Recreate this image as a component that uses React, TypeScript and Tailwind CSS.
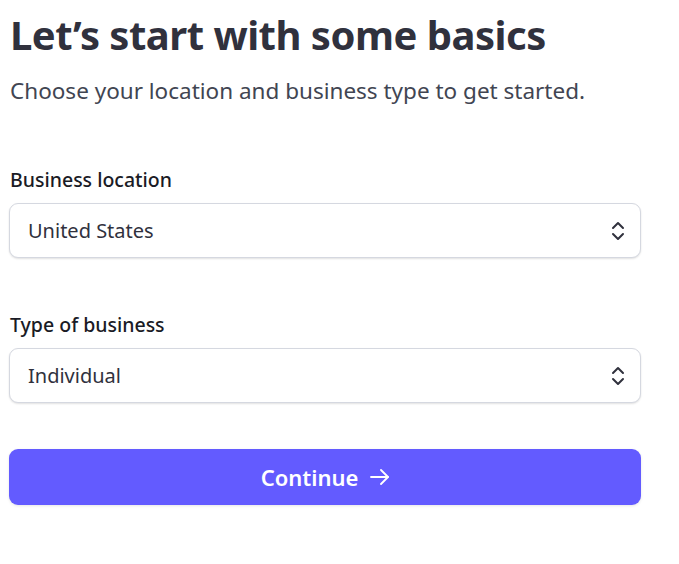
function SelectBox({ value }: { value: string }) {
  return (
    <div className="flex items-center justify-between h-[55px] pl-[18px] pr-[14px] bg-white border border-[#d5d8e0] rounded-[9px] shadow-[0_1px_2px_rgba(0,0,0,0.12)]">
      <span className="text-[20px] text-[#30313d]">{value}</span>
      <svg width="16" height="22" viewBox="0 0 16 22" fill="none" stroke="#30313d" strokeWidth="2" strokeLinecap="round" strokeLinejoin="round">
        <path d="M3 8l5-5 5 5" />
        <path d="M3 14l5 5 5-5" />
      </svg>
    </div>
  )
}

export default function App() {
  return (
    <div className="min-h-screen bg-white font-['Noto_Sans',sans-serif]">
      <div className="w-[641px] pl-[9px] pt-[7px]">
        <h1 className="text-[40px] leading-[56px] font-bold text-[#30313d] pl-[1px] tracking-[-0.5px]">
          Let’s start with some basics
        </h1>
        <p className="mt-[13px] text-[22.5px] leading-[30px] text-[#414552] pl-[1px]">
          Choose your location and business type to get started.
        </p>

        <div className="mt-[61px]">
          <label className="block text-[19.5px] leading-[26px] font-medium text-[#1a1b25] pl-[1px]">Business location</label>
          <div className="mt-[10px]">
            <SelectBox value="United States" />
          </div>
        </div>

        <div className="mt-[54px]">
          <label className="block text-[19.5px] leading-[26px] font-medium text-[#1a1b25] pl-[1px]">Type of business</label>
          <div className="mt-[10px]">
            <SelectBox value="Individual" />
          </div>
        </div>

        <button className="mt-[46px] w-full h-[56px] rounded-[9px] bg-[#635bff] text-white text-[22px] font-semibold flex items-center justify-center gap-[12px] shadow-[0_1px_3px_rgba(0,0,0,0.1)]">
          Continue
          <svg width="19" height="16" viewBox="0 0 19 16" fill="none" stroke="currentColor" strokeWidth="1.8" strokeLinecap="round" strokeLinejoin="round">
            <path d="M1 8h17" />
            <path d="M11 1l7 7-7 7" />
          </svg>
        </button>
      </div>
    </div>
  )
}
